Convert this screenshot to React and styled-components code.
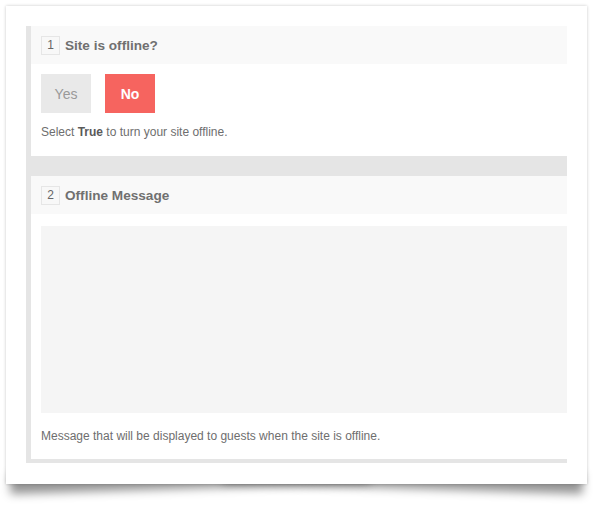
import React from "react";
import styled, { createGlobalStyle } from "styled-components";

const GlobalStyle = createGlobalStyle`
  html, body { margin: 0; padding: 0; background: #fff; }
  body { font-family: "Liberation Sans", Arial, sans-serif; color: #666; }
`;

const Page = styled.div`
  position: relative;
  z-index: 0;
  padding: 6px 14px 0 6px;
  height: 513px;
  box-sizing: border-box;
`;

const Card = styled.div`
  position: relative;
  background: #fff;
  padding: 20px 20px 21px 20px;
  box-shadow: 0 0 3px rgba(0, 0, 0, 0.22);

  &::before,
  &::after {
    content: "";
    position: absolute;
    bottom: 6px;
    width: 62%;
    height: 20px;
    z-index: -1;
    box-shadow: 0 16px 10px rgba(0, 0, 0, 0.42);
  }
  &::before {
    left: 4px;
    transform: rotate(-1.8deg);
    transform-origin: left bottom;
  }
  &::after {
    right: 4px;
    transform: rotate(1.8deg);
    transform-origin: right bottom;
  }
`;

const Panel = styled.div`
  border-left: 5px solid #e5e5e5;
  border-bottom: 4px solid #e5e5e5;
  background: #fff;
`;

const Section = styled.section`
  padding-bottom: ${(p) => p.$bottom}px;
`;

const SectionHeader = styled.div`
  height: 38px;
  background: #f9f9f9;
  display: flex;
  align-items: center;
  gap: 5px;
  padding-left: 10px;
`;

const NumBadge = styled.span`
  width: 19px;
  height: 19px;
  box-sizing: border-box;
  border: 1px solid #e6e6e6;
  background: #f8f8f8;
  display: flex;
  align-items: center;
  justify-content: center;
  font-size: 12px;
  color: #666;
`;

const Title = styled.h3`
  margin: 0;
  font-size: 13.6px;
  font-weight: bold;
  color: #707070;
`;

const Body = styled.div`
  padding-left: 10px;
  padding-top: ${(p) => p.$top}px;
`;

const ButtonRow = styled.div`
  display: flex;
  gap: 14px;
`;

const Toggle = styled.button`
  width: 50px;
  height: 39px;
  border: none;
  padding: 0;
  font-family: inherit;
  font-size: 14px;
  font-weight: ${(p) => (p.$active ? "bold" : "normal")};
  background: ${(p) => (p.$active ? "#f6645f" : "#e9e9e9")};
  color: ${(p) => (p.$active ? "#fff" : "#999")};
  cursor: pointer;
`;

const Help = styled.p`
  margin: ${(p) => p.$top}px 0 0 0;
  font-size: 12px;
  line-height: 18px;
  color: #6e6e6e;

  strong { color: #5a5a5a; }
`;

const Separator = styled.div`
  height: 20px;
  background: #e5e5e5;
`;

const MessageArea = styled.textarea`
  display: block;
  width: 100%;
  height: 187px;
  box-sizing: border-box;
  border: none;
  background: #f5f5f5;
  resize: none;
  outline: none;
  margin: 0;
`;

export default function App() {
  return (
    <>
      <GlobalStyle />
      <Page>
        <Card>
          <Panel>
            <Section $bottom={15}>
              <SectionHeader>
                <NumBadge>1</NumBadge>
                <Title>Site is offline?</Title>
              </SectionHeader>
              <Body $top={10}>
                <ButtonRow>
                  <Toggle>Yes</Toggle>
                  <Toggle $active>No</Toggle>
                </ButtonRow>
                <Help $top={10}>
                  Select <strong>True</strong> to turn your site offline.
                </Help>
              </Body>
            </Section>
            <Separator />
            <Section $bottom={14}>
              <SectionHeader>
                <NumBadge>2</NumBadge>
                <Title>Offline Message</Title>
              </SectionHeader>
              <Body $top={12}>
                <MessageArea />
                <Help $top={14}>
                  Message that will be displayed to guests when the site is offline.
                </Help>
              </Body>
            </Section>
          </Panel>
        </Card>
      </Page>
    </>
  );
}
